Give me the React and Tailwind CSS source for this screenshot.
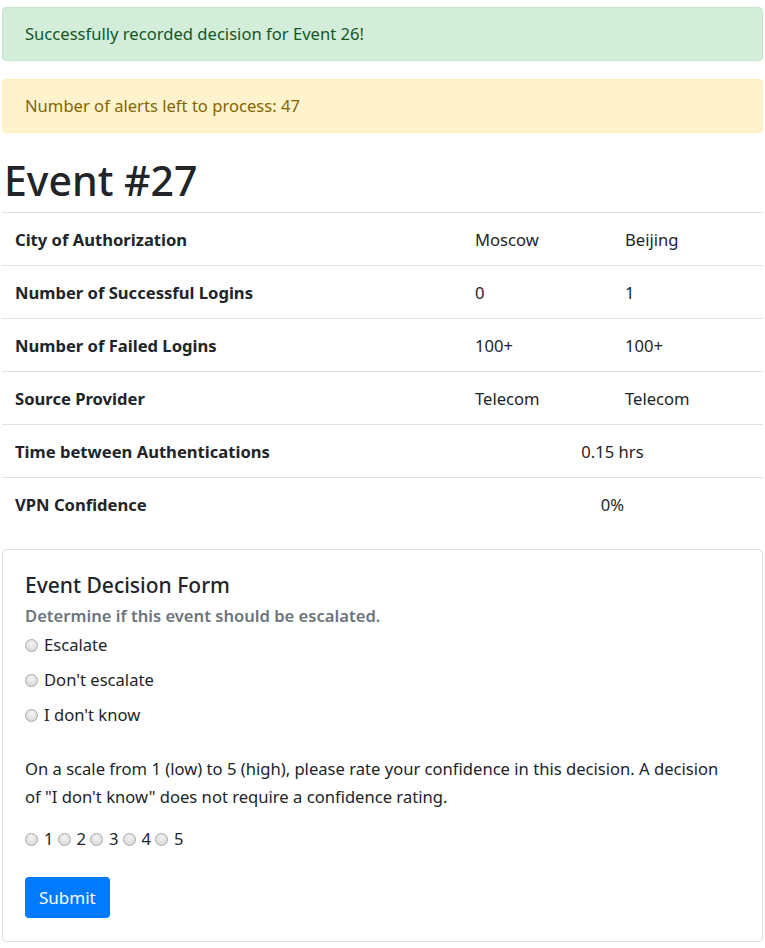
const rows = [
  { label: "City of Authorization", values: ["Moscow", "Beijing"] },
  { label: "Number of Successful Logins", values: ["0", "1"] },
  { label: "Number of Failed Logins", values: ["100+", "100+"] },
  { label: "Source Provider", values: ["Telecom", "Telecom"] },
  { label: "Time between Authentications", span: "0.15 hrs" },
  { label: "VPN Confidence", span: "0%" },
];

const decisions = ["Escalate", "Don't escalate", "I don't know"];

function Radio() {
  return (
    <span className="inline-block h-[13px] w-[13px] shrink-0 rounded-full border border-[#a8a8a8] bg-[radial-gradient(circle_at_50%_35%,#f4f4f4,#d2d2d2)]" />
  );
}

export default function App() {
  return (
    <div
      className="min-h-screen bg-white px-[2px] pt-[7px] text-[16.6px] leading-[1.5] text-[#212529]"
      style={{ fontFamily: '"Noto Sans", "Open Sans", sans-serif' }}
    >
      <div className="flex h-[54px] items-center rounded-[4px] border border-[#c3e6cb] bg-[#d4edda] px-[22px] text-[#155724]">
        Successfully recorded decision for Event 26!
      </div>
      <div className="mt-[18px] flex h-[54px] items-center rounded-[4px] border border-[#ffeeba] bg-[#fff3cd] px-[22px] text-[#856404]">
        Number of alerts left to process: 47
      </div>

      <h1 className="mt-[19px] flex h-[60px] items-center pb-[4px] pl-[2px] text-[41px] leading-none font-medium">
        Event #27
      </h1>

      <table className="w-full border-collapse">
        <tbody>
          {rows.map((row) => (
            <tr key={row.label} className="h-[53px] border-t border-[#dee2e6]">
              <td className="w-[460px] px-[13px] pt-[2px] align-middle font-bold">{row.label}</td>
              {row.span ? (
                <td colSpan={2} className="px-[13px] pt-[2px] text-center align-middle">
                  {row.span}
                </td>
              ) : (
                row.values.map((v, i) => (
                  <td key={i} className={`${i === 0 ? "w-[150px]" : ""} px-[13px] pt-[2px] align-middle`}>
                    {v}
                  </td>
                ))
              )}
            </tr>
          ))}
        </tbody>
      </table>

      <div className="mt-[18px] rounded-[4px] border border-[#dfdfdf] px-[22px] pt-[23px] pb-[23px]">
        <h5 className="text-[21px] leading-[1.2] font-medium">Event Decision Form</h5>
        <h6 className="mt-[7px] text-[16.6px] leading-[1.3] font-semibold text-[#6c757d]">
          Determine if this event should be escalated.
        </h6>
        <div className="mt-[2px] flex flex-col">
          {decisions.map((d) => (
            <label key={d} className="flex h-[35px] items-center gap-[6px]">
              <Radio />
              <span>{d}</span>
            </label>
          ))}
        </div>
        <p className="mt-[22px] leading-[28px]">
          On a scale from 1 (low) to 5 (high), please rate your confidence in this decision. A decision
          <br />
          of "I don't know" does not require a confidence rating.
        </p>
        <div className="mt-[14px] flex h-[28px] items-center">
          {[1, 2, 3, 4, 5].map((n) => (
            <label key={n} className="mr-[4px] flex items-center gap-[6px]">
              <Radio />
              <span>{n}</span>
            </label>
          ))}
        </div>
        <button
          type="button"
          className="mt-[24px] h-[41px] rounded-[4px] bg-[#007bff] px-[14px] text-[17px] text-white"
        >
          Submit
        </button>
      </div>
    </div>
  );
}
